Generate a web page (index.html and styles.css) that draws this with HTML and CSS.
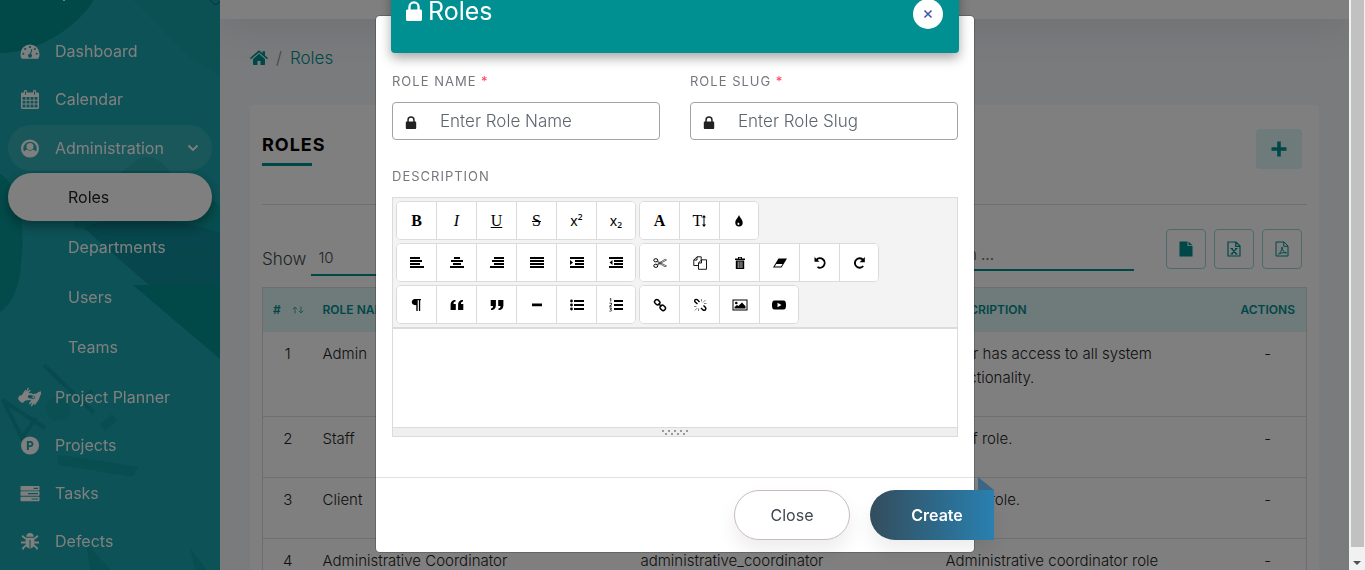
FILE: index.html
```html
<!DOCTYPE html>
<html lang="en">
<head>
<meta charset="utf-8">
<title>Roles</title>
<link rel="stylesheet" href="styles.css">
</head>
<body>
<svg class="sprite" aria-hidden="true">
  <symbol id="gauge" viewBox="0 0 20 16"><path fill-rule="evenodd" d="M10 1a9.500 9.500 0 0 0-9.500 9.500c0 2 .5 3.500 1.300 4.700h16.400c.8-1.200 1.300-2.700 1.300-4.700A9.500 9.500 0 0 0 10 1zM10 2.500a1 1 0 1 1 0 2 1 1 0 0 1 0-2zM5.200 4.500a1 1 0 1 1 0 2 1 1 0 0 1 0-2zM3.300 9.300a1 1 0 1 1 0 2 1 1 0 0 1 0-2zM14.800 4.500a1 1 0 1 1 0 2 1 1 0 0 1 0-2zM16.700 9.300a1 1 0 1 1 0 2 1 1 0 0 1 0-2zM11.400 5.400l1 .3-1.300 4.800a2 2 0 1 1-1.100-.3z"/></symbol>
  <symbol id="calendar" viewBox="0 0 18 19"><path fill-rule="evenodd" d="M1.500 2.500H3V1.300C3 .6 3.500 0 4.200 0h.6C5.500 0 6 .6 6 1.300v1.200h6V1.300c0-.7.5-1.300 1.200-1.300h.6c.7 0 1.200.6 1.200 1.300v1.200h1.500c.8 0 1.500.6 1.500 1.400v13.600c0 .8-.7 1.500-1.500 1.500h-15C.7 19 0 18.300 0 17.500V3.900c0-.8.7-1.400 1.500-1.400zM4 1.200v3.600h1V1.200zM13 1.200v3.600h1V1.200zM1.500 7v2.800h3V7zM5.500 7v2.800h3V7zM9.500 7v2.800h3V7zM13.500 7v2.800h3V7zM1.500 10.800v2.700h3v-2.700zM5.500 10.800v2.700h3v-2.700zM9.500 10.800v2.700h3v-2.700zM13.500 10.800v2.700h3v-2.700zM1.500 14.500v3h3v-3zM5.500 14.500v3h3v-3zM9.500 14.500v3h3v-3zM13.500 14.500v3h3v-3z"/></symbol>
  <symbol id="user" viewBox="0 0 20 20"><circle cx="10" cy="10" r="8.300" fill="none" stroke="currentColor" stroke-width="2.400"/><circle cx="10" cy="8" r="3.700"/><path d="M3 15.500c.6-3 2-4.100 4.300-4.100 1.700 1.400 3.700 1.400 5.400 0 2.300 0 3.700 1.100 4.300 4.100C13 20 7 20 3 15.500z"/></symbol>
  <symbol id="hands" viewBox="0 0 24 20"><path d="M1 9l3-1 3-5 1 .2-.5 2L10 .5l1 .5-1.500 3.500L12 2.800l.8.700L10.500 6l3 .2c1 .3 1 1.500 0 1.600l-2 .2c-1.800 0-2.300 3-.3 3.300l1.800.2c.8.300.6 1.500-.4 1.500l-5 .5L4.500 16 2 14.500 0 12z"/><path d="M23 7l-2.500 6-3.500 5-1-.4.600-2.100-2.800 4-1-.6 1.300-3.400-2.600 2-.7-.8 2.100-3.200c-1-.6-.6-1.800.4-1.800l2.200.2c2-.2 2-3 .2-3.200l-2-.2c-1-.2-.9-1.500.1-1.600l4.200-.1L20.500 5l2.500-.8z"/><circle cx="15.300" cy="10.300" r="1"/></symbol>
  <symbol id="project" viewBox="0 0 20 20"><path fill-rule="evenodd" d="M10 .5a9.500 9.500 0 1 0 0 19 9.500 9.500 0 0 0 0-19zM6.700 5.200h3.800c4.200 0 4.200 6.300 0 6.300H8.800v3.300H6.700zM8.800 7v2.700h1.700c1.600 0 1.600-2.700 0-2.700z"/></symbol>
  <symbol id="server" viewBox="0 0 20 16"><path fill-rule="evenodd" d="M1 .5h18l.5.5v3.500l-.5.500H1l-.5-.5V1zM13.500 2.200v1.200H18V2.200zM1 5.800h18l.5.500v3.500l-.5.500H1l-.5-.5V6.300zM8 7.500v1.200h10V7.500zM1 11.200h18l.5.500v3.500l-.5.500H1l-.5-.5v-3.500zM11.500 12.900v1.200H18v-1.200z"/></symbol>
  <symbol id="bug" viewBox="0 0 18 18"><path d="M5.500 4.500a3.500 3.500 0 0 1 7 0zM4.800 5.500h8.400v4.500c0 3-1 5.200-3.700 5.800V7.500H8.500v8.300C5.800 15.200 4.800 13 4.800 10z"/><path fill="none" stroke="currentColor" stroke-width="1.800" d="M1.500 3.500l3.500 3M16.500 3.500l-3.500 3M.5 10h4.500M17.500 10H13M2.500 16.500V15L5.500 12.500M15.500 16.500V15l-3-2.500"/></symbol>
  <symbol id="chevron" viewBox="0 0 12 8"><path fill="none" stroke="currentColor" stroke-width="1.800" d="M1.500 1.500L6 6l4.500-4.500"/></symbol>
  <symbol id="home" viewBox="0 0 18 16"><path d="M0 8l9-7.700 3.500 3V1.200H15v4.300L18 8l-1 1.200-8-6.800-8 6.800zM3 9l6-5.200L15 9v5.500l-.6.600h-3.900V11H7.500v4.100H3.600l-.6-.6z"/></symbol>
  <symbol id="lock" viewBox="0 0 16 20"><path fill-rule="evenodd" d="M2.300 8.500V6a5.700 5.700 0 0 1 11.400 0v2.500h.8c.8 0 1.500.6 1.500 1.400v8.600c0 .8-.7 1.500-1.500 1.500h-13C.7 20 0 19.300 0 18.500V9.900c0-.8.700-1.400 1.500-1.400zM4.600 8.500h6.800V6a3.400 3.400 0 0 0-6.800 0z"/></symbol>
  <symbol id="plus" viewBox="0 0 16 16"><path d="M6.200.5h3.600v5.700h5.700v3.600H9.800v5.700H6.200V9.800H.5V6.200h5.700z"/></symbol>
  <symbol id="file" viewBox="0 0 14 16"><path d="M.5.500h8v4.500h5v10.500H.5zM9.500.5l4 3.700h-4z"/></symbol>
  <symbol id="file-x" viewBox="0 0 14 16"><path fill="none" stroke="currentColor" stroke-width="1.200" d="M1 1h8l4 4v10H1zM8.700 1v4.300H13M4.500 7.500l5 5.500M9.500 7.500l-5 5.500M3.500 7.500h2.500M8 7.500h2.500M3.500 13H6M8 13h2.500"/></symbol>
  <symbol id="file-pdf" viewBox="0 0 14 16"><path fill="none" stroke="currentColor" stroke-width="1" d="M1 1h8l4 4v10H1zM8.700 1v4.300H13M3 13.500c2-1 4-4 4-7.500 0 3 2 5.500 4.500 6-2.500-.7-5-.2-7 .7"/></symbol>
  <symbol id="left" viewBox="0 0 14 12"><path d="M0 0h10v2H0zM0 3h12v2H0zM0 6h10v2H0zM0 9h14v2H0z"/></symbol>
  <symbol id="center" viewBox="0 0 14 12"><path d="M4 0h6v2H4zM1 3h12v2H1zM3 6h8v2H3zM0 9h14v2H0z"/></symbol>
  <symbol id="right" viewBox="0 0 14 12"><path d="M4 0h10v2H4zM2 3h12v2H2zM4 6h10v2H4zM0 9h14v2H0z"/></symbol>
  <symbol id="justify" viewBox="0 0 14 12"><path d="M0 0h14v2H0zM0 3h14v2H0zM0 6h14v2H0zM0 9h14v2H0z"/></symbol>
  <symbol id="indent" viewBox="0 0 14 12"><path d="M0 0h14v2H0zM5 3h9v2H5zM5 6h9v2H5zM0 9h14v2H0zM0 3l3 2.500L0 8z"/></symbol>
  <symbol id="outdent" viewBox="0 0 14 12"><path d="M0 0h14v2H0zM5 3h9v2H5zM5 6h9v2H5zM0 9h14v2H0zM3.500 3l-3 2.500 3 2.500z"/></symbol>
  <symbol id="para" viewBox="0 0 14 14"><path d="M5 1h6v1.300h-.8V13H8.900V2.300H7.700V13H6.300V7.300C0 7.300 1 1 5 1z"/></symbol>
  <symbol id="quote-open" viewBox="0 0 14 14"><path d="M5.500 2v1.500C4 3.700 3.500 4.600 3.500 6h2.300v6H.6V7c0-3 1.500-5 4.900-5zM13 2v1.500c-1.500.2-2 1.100-2 2.500h2.300v6H8.100V7c0-3 1.500-5 4.900-5z"/></symbol>
  <symbol id="quote-close" viewBox="0 0 14 14"><path d="M1 12v-1.500C2.500 10.300 3 9.400 3 8H.7V2h5.200v5c0 3-1.500 5-4.900 5zM8.500 12v-1.500c1.500-.2 2-1.100 2-2.500H8.200V2h5.200v5c0 3-1.500 5-4.900 5z"/></symbol>
  <symbol id="rule" viewBox="0 0 14 14"><path d="M2 5.500h10v2.800H2z"/></symbol>
  <symbol id="bullets" viewBox="0 0 14 12"><path d="M4 1h10v2H4zM4 5h10v2H4zM4 9h10v2H4z"/><circle cx="1.500" cy="2" r="1.400"/><circle cx="1.500" cy="6" r="1.400"/><circle cx="1.500" cy="10" r="1.400"/></symbol>
  <symbol id="numbers" viewBox="0 0 14 14"><path d="M5 2h9v2H5zM5 6h9v2H5zM5 10h9v2H5z"/><path fill="none" stroke="currentColor" stroke-width=".8" d="M.8 1l1-.5v3M.5 5.200h2v1.500l-2 1.500h2.200M.5 10h2L1.500 11.500c2 0 1.500 2-1 1.600"/></symbol>
  <symbol id="drop" viewBox="0 0 14 14"><path fill-rule="evenodd" d="M7 1c1 3 3.700 4.500 3.700 7.800a3.700 3.700 0 0 1-7.400 0C3.300 5.500 6 4 7 1zM6 8.500c-.9.700-.7 2.600.7 2.500 1-.2 1-1.600.3-1.900z"/></symbol>
  <symbol id="cut" viewBox="0 0 14 14"><g fill="none" stroke="currentColor"><ellipse cx="2.800" cy="4.300" rx="2" ry="1.600"/><ellipse cx="2.800" cy="9.800" rx="2" ry="1.600"/><path stroke-width=".6" d="M4.500 5.200L13.500 10l-1.300.8L4.700 6.500M4.500 9L13.500 4l-1.300-.8L4.700 7.800"/></g></symbol>
  <symbol id="copy" viewBox="0 0 14 14"><path fill="none" stroke="currentColor" stroke-width=".9" d="M5 9.500H.8V4L4 .8h4.200v3M4 .8V4H.8M8.500 3.800h5v9.500h-8V7zM8.500 3.800V7h-3"/></symbol>
  <symbol id="trash" viewBox="0 0 14 14"><path fill-rule="evenodd" d="M2 2.500h3V1h4v1.500h3v1.500H2zM2.800 4.500h8.400V13H2.800zM4.800 5.500V12h.7V5.500zM6.700 5.500V12h.7V5.500zM8.600 5.500V12h.7V5.500zM6 1.800v.7h2v-.7z"/></symbol>
  <symbol id="eraser" viewBox="0 0 14 14"><path fill-rule="evenodd" d="M5.500 2.500H14L8.500 11.500H0zM3.300 8L1.700 10.600H8L9.600 8z"/></symbol>
  <symbol id="undo" viewBox="0 0 14 14"><path fill="none" stroke="currentColor" stroke-width="1.900" d="M3.500 3.800a4.700 4.700 0 1 1 1 7.200"/><path d="M1.500 1v4.800h5z"/></symbol>
  <symbol id="redo" viewBox="0 0 14 14"><path fill="none" stroke="currentColor" stroke-width="1.900" d="M11.200 10a4.700 4.700 0 1 1 0-6"/><path d="M12.800 1v5.200H7.600z"/></symbol>
  <symbol id="link" viewBox="0 0 14 14"><g fill="none" stroke="currentColor" stroke-width="1.500"><rect x="1.500" y="2" width="5.500" height="4.400" rx="2" transform="rotate(45 4.200 4.200)"/><rect x="7" y="7.700" width="5.500" height="4.400" rx="2" transform="rotate(45 9.800 9.900)"/><path d="M5.500 5.500l3 3"/></g></symbol>
  <symbol id="unlink" viewBox="0 0 14 14"><path fill="none" stroke="currentColor" stroke-width="1.400" d="M4.500 6L2 3.800c-1-2 1-3 2.500-2L6.500 4M8 10l2 2c2 1 3.500-1 2.500-2.500L10.500 7.500"/><path fill="none" stroke="currentColor" stroke-width=".5" d="M8.500 1v2.500M12.500 2L10 4.500M13.500 5.500H11M1 8.500h2.500M1.800 12.500L4.300 10M5.500 13v-2.500"/></symbol>
  <symbol id="image" viewBox="0 0 16 14"><path fill-rule="evenodd" d="M.5 1.500h15v11H.5zM1.500 2.500v9h13v-9z"/><circle cx="4.300" cy="5" r="1.300"/><path d="M2.500 10.500V9L5 7l1.300 1L10 4.500l3.500 3.700v2.300z"/></symbol>
  <symbol id="video" viewBox="0 0 14 14"><path fill-rule="evenodd" d="M2.500 2.500h9C13.500 2.500 14 4 14 7s-.5 4.500-2.500 4.500h-9C.5 11.500 0 10 0 7s.5-4.500 2.500-4.500zM5.500 4.800v4.400L9.500 7z"/></symbol>
  <symbol id="sort" viewBox="0 0 12 8"><path fill="none" stroke="currentColor" d="M3 7.500V1M.8 3.200L3 1l2.200 2.200M9 .5V7M6.800 4.800L9 7l2.200-2.200"/></symbol>
  <symbol id="text-size" viewBox="0 0 4 12"><path d="M2 0l2 2.500H2.500v7H4L2 12 0 9.500h1.500v-7H0z"/></symbol>
</svg>
<div class="screen">
  <div class="app">
    <aside class="sidebar">
      <svg class="sidebar-art" viewBox="0 0 220 570" preserveAspectRatio="none" aria-hidden="true">
        <path class="art-dark" d="M0 0h94C75 30 35 53 0 53z"/>
        <path class="art-dark" d="M0 174c22 12 25 60 21 90C20 285 12 305 0 312z" opacity=".8"/>
        <path class="art-dark" d="M133 0h87v75L190 58z" opacity=".15"/>
        <path class="art-dark" d="M120 173l18-14c12-5 22 0 31 12l51 34v45L74 228V221h20z" opacity=".5"/>
        <path fill="#0c8c98" d="M84 228c30-18 110-5 136 5v67L150 286z"/>
        <path class="art-dark" d="M133 285h87v74z"/>
        <path fill="none" stroke="#0a9f78" opacity=".45" d="M110 235q40 5 60 30t50 15M120 240q35 10 60 35t40 25M160 232q5 28 60 20M85 230q60 10 90 55"/>
        <g opacity=".35"><path class="art-line" d="M2 400l43 28M4 402l18 36 14-20M44 365l50 48M78 403l14-12"/><circle class="art-dark" cx="58" cy="409" r="12" opacity=".5"/><path class="art-dark" d="M100 424l12-10 5 6-12 11zM86 543l25 27H90zM190 548l17 22h-12zM58 455q40 5 80 12l-5 10-75-12z"/></g>
        <path fill="#fff" d="M63 0h2v1h-2z"/>
        <path fill="none" stroke="#0b6f70" d="M210 0l5 5 5-3"/>
      </svg>
      <nav class="menu">
        <a href="#"><svg><use href="#gauge"/></svg>Dashboard</a>
        <a href="#"><svg><use href="#calendar"/></svg>Calendar</a>
        <a href="#" class="open"><svg><use href="#user"/></svg>Administration<svg class="chev"><use href="#chevron"/></svg></a>
        <div class="submenu">
          <a href="#" class="active">Roles</a>
          <a href="#">Departments</a>
          <a href="#">Users</a>
          <a href="#">Teams</a>
        </div>
        <a href="#"><svg class="wide"><use href="#hands"/></svg>Project Planner</a>
        <a href="#"><svg><use href="#project"/></svg>Projects</a>
        <a href="#"><svg><use href="#server"/></svg>Tasks</a>
        <a href="#"><svg><use href="#bug"/></svg>Defects</a>
      </nav>
    </aside>
    <main class="main">
      <div class="topbar"></div>
      <div class="content">
        <nav class="crumbs"><a href="#" aria-label="Home"><svg><use href="#home"/></svg></a><span>/</span><a href="#">Roles</a></nav>
        <section class="card">
          <header class="card-head">
            <h1>Roles</h1>
            <button class="add" aria-label="Add role"><svg><use href="#plus"/></svg></button>
          </header>
          <div class="tools">
            <label class="show">Show <select><option>10</option></select></label>
            <input class="search" type="search" placeholder="Search ..." aria-label="Search">
            <div class="exports">
              <button aria-label="CSV"><svg><use href="#file"/></svg></button>
              <button aria-label="Excel"><svg><use href="#file-x"/></svg></button>
              <button aria-label="PDF"><svg><use href="#file-pdf"/></svg></button>
            </div>
          </div>
          <table class="roles">
            <colgroup><col class="c-num"><col class="c-name"><col class="c-slug"><col class="c-desc"><col class="c-act"></colgroup>
            <thead><tr><th class="num"># <svg><use href="#sort"/></svg></th><th>Role Name</th><th>Role Slug</th><th>Description</th><th class="act">Actions</th></tr></thead>
            <tbody>
              <tr><td class="num">1</td><td>Admin</td><td>admin</td><td>User has access to all system functionality.</td><td class="act">-</td></tr>
              <tr><td class="num">2</td><td>Staff</td><td>staff</td><td>Staff role.</td><td class="act">-</td></tr>
              <tr><td class="num">3</td><td>Client</td><td>client</td><td>Client role.</td><td class="act">-</td></tr>
              <tr><td class="num">4</td><td>Administrative Coordinator</td><td>administrative_coordinator</td><td>Administrative coordinator role</td><td class="act">-</td></tr>
            </tbody>
          </table>
        </section>
      </div>
    </main>
  </div>
  <div class="scrollbar" aria-hidden="true"><div class="thumb"></div><div class="arrow"></div></div>
  <div class="backdrop">
    <div class="modal" role="dialog" aria-label="Roles">
      <header class="modal-head">
        <h2><svg><use href="#lock"/></svg>Roles</h2>
        <button class="close" aria-label="Close dialog"><svg viewBox="0 0 10 10"><path fill="none" stroke="currentColor" stroke-width="1.500" d="M1.500 1.500l7 7M8.500 1.500l-7 7"/></svg></button>
      </header>
      <div class="modal-body">
        <div class="fields">
          <div class="field"><label for="name">Role Name <sup>*</sup></label><div class="box"><svg><use href="#lock"/></svg><input id="name" type="text" placeholder="Enter Role Name"></div></div>
          <div class="field"><label for="slug">Role Slug <sup>*</sup></label><div class="box"><svg><use href="#lock"/></svg><input id="slug" type="text" placeholder="Enter Role Slug"></div></div>
        </div>
        <label class="desc-label" for="desc">Description</label>
        <div class="editor">
          <div class="bar">
            <div class="group"><button><b>B</b></button><button><i>I</i></button><button><u>U</u></button><button><s>S</s></button><button class="sans">x²</button><button class="sans">x₂</button></div>
            <div class="group"><button><b>A</b></button><button aria-label="Text size"><span class="size">T<svg><use href="#text-size"/></svg></span></button><button aria-label="Ink"><svg><use href="#drop"/></svg></button></div>
            <div class="group"><button aria-label="Left"><svg class="rows"><use href="#left"/></svg></button><button aria-label="Center"><svg class="rows"><use href="#center"/></svg></button><button aria-label="Right"><svg class="rows"><use href="#right"/></svg></button><button aria-label="Justify"><svg class="rows"><use href="#justify"/></svg></button><button aria-label="Indent"><svg class="rows"><use href="#indent"/></svg></button><button aria-label="Outdent"><svg class="rows"><use href="#outdent"/></svg></button></div>
            <div class="group"><button aria-label="Cut"><svg><use href="#cut"/></svg></button><button aria-label="Copy"><svg><use href="#copy"/></svg></button><button aria-label="Delete"><svg><use href="#trash"/></svg></button><button aria-label="Clear"><svg><use href="#eraser"/></svg></button><button aria-label="Undo"><svg><use href="#undo"/></svg></button><button aria-label="Redo"><svg><use href="#redo"/></svg></button></div>
            <div class="group"><button aria-label="Paragraph"><svg><use href="#para"/></svg></button><button aria-label="Open quote"><svg><use href="#quote-open"/></svg></button><button aria-label="Close quote"><svg><use href="#quote-close"/></svg></button><button aria-label="Rule"><svg><use href="#rule"/></svg></button><button aria-label="Bullets"><svg class="rows"><use href="#bullets"/></svg></button><button aria-label="Numbers"><svg><use href="#numbers"/></svg></button></div>
            <div class="group"><button aria-label="Link"><svg><use href="#link"/></svg></button><button aria-label="Unlink"><svg><use href="#unlink"/></svg></button><button aria-label="Image"><svg class="pic"><use href="#image"/></svg></button><button aria-label="Video"><svg><use href="#video"/></svg></button></div>
          </div>
          <textarea id="desc"></textarea>
          <div class="grip"><svg viewBox="0 0 26 5"><path d="M0 0h2v2H0zM6 0h2v2H6zM12 0h2v2h-2zM18 0h2v2h-2zM24 0h2v2h-2zM3 3h2v2H3zM9 3h2v2H9zM15 3h2v2h-2zM21 3h2v2h-2z"/></svg></div>
        </div>
      </div>
      <footer class="modal-foot">
        <button class="btn cancel">Close</button>
        <button class="btn create">Create</button>
      </footer>
    </div>
  </div>
</div>
</body>
</html>
```

FILE: styles.css
```css
* { box-sizing: border-box; }
body { margin: 0; font-family: Inter, "Open Sans", sans-serif; font-size: 15px; line-height: 24px; color: #40484f; }
button, input, select, textarea { font: inherit; color: inherit; margin: 0; }
a { color: inherit; text-decoration: none; }
svg { fill: currentColor; display: block; }
.sprite { display: none; }
.screen { position: relative; display: flex; height: 100vh; overflow: hidden; }
.app { flex: 1; min-width: 0; display: flex; }

.sidebar { position: relative; width: 220px; flex: none; overflow: hidden; background: #1aa4ac; color: #fff; }
.sidebar-art { position: absolute; inset: 0; width: 100%; height: 100%; }
.art-dark { fill: #009290; }
.art-line { fill: none; stroke: #008280; stroke-width: 4; }
.menu { position: relative; padding: 27px 8px 0; font-size: 16px; }
.menu a { display: flex; align-items: center; height: 48px; padding-left: 12px; gap: 15px; border-radius: 24px; }
.menu svg { width: 20px; height: 19px; }
.menu svg.wide { width: 24px; height: 20px; margin: 0 -2px; }
.menu .open { background: rgba(255, 255, 255, .12); height: 46px; margin: 2px 0; }
.menu svg.chev { width: 12px; height: 8px; margin-left: auto; margin-right: 13px; }
.submenu { display: grid; gap: 2px; padding-bottom: 2px; }
.submenu a { padding-left: 60px; }
.submenu .active { background: #fff; color: #222; box-shadow: 0 5px 12px rgba(0, 0, 0, .35); }

.main { flex: 1; min-width: 0; background: #f4f6fa; }
.topbar { height: 19px; background: #fff; box-shadow: 0 0 40px rgba(80, 90, 100, .25); }
.content { padding: 27px 30px 0; }
.crumbs { display: flex; align-items: center; gap: 8px; font-size: 17px; font-weight: 300; color: #009091; }
.crumbs span { color: #888; }
.crumbs svg { width: 18px; height: 16px; }
.card { margin-top: 35px; padding: 24px 12px 0; background: #fff; border-radius: 4px; min-height: 600px; }
.card-head { display: flex; justify-content: space-between; align-items: flex-start; padding-right: 5px; height: 76px; border-bottom: 1px solid #ddd; }
.card-head h1 { margin: 4px 0 0; font-size: 18px; line-height: 24px; font-weight: 700; letter-spacing: 1px; text-transform: uppercase; color: #000; }
.card-head h1::after { content: ""; display: block; width: 50px; height: 3px; margin-top: 6px; background: #009091; }
.add { width: 46px; height: 40px; display: grid; place-items: center; border: 0; border-radius: 4px; background: #dff4f5; color: #009091; }
.add svg { width: 16px; height: 16px; }
.tools { display: flex; align-items: flex-start; padding: 24px 5px 11px 0; }
.show { display: flex; align-items: center; gap: 5px; margin-top: 13px; font-size: 17px; font-weight: 300; }
.show select { appearance: none; width: 120px; height: 34px; padding: 0 7px; border: 0; border-bottom: 2px solid #009091; border-radius: 0; background: none; font-size: 15px; }
.search { width: 207px; height: 32px; margin: 10px 0 0 auto; padding: 0; border: 0; border-bottom: 2px solid #009091; background: none; }
.exports { display: flex; gap: 8px; margin-left: 32px; }
.exports button { width: 40px; height: 40px; display: grid; place-items: center; border: 1px solid #9ed4d6; border-radius: 4px; background: none; color: #009091; }
.exports svg { width: 14px; height: 16px; }
.roles { width: 100%; table-layout: fixed; border-collapse: collapse; border: 1px solid #d8dadd; }
.c-num { width: 50px; }
.c-name { width: 318px; }
.c-slug { width: 305px; }
.c-act { width: 77px; }
.roles th { height: 44px; padding: 0 10px; background: #dff4f5; color: #009091; font-size: 12px; font-weight: 600; text-align: left; text-transform: uppercase; white-space: nowrap; }
.roles th svg { display: inline-block; width: 12px; height: 8px; margin-left: 8px; opacity: .7; }
.roles td { padding: 10px 10px 26px; vertical-align: top; border-bottom: 1px solid #dbe1e6; font-weight: 300; color: #222; }
.roles td.num { text-align: center; }
.roles .act { text-align: center; padding-left: 0; padding-right: 0; }

.scrollbar { position: relative; z-index: 2; width: 16px; flex: none; display: flex; flex-direction: column; align-items: center; background: #f1f1f1; }
.thumb { width: 13px; flex: 1; background: #c1c1c1; }
.arrow { width: 0; margin: 14px 0 5px; border: 4px solid transparent; border-top-color: #505050; border-bottom: 0; }

.backdrop { position: absolute; inset: 0; display: flex; justify-content: center; align-items: flex-start; padding: 16px 15px 0 0; background: rgba(0, 0, 0, .5); }
.modal { width: 598px; background: #fff; border-radius: 4px; box-shadow: 0 0 0 1px rgba(0, 0, 0, .2); }
.modal-head { display: flex; align-items: center; justify-content: space-between; height: 84px; margin: -47px 15px 0; padding: 0 16px 0 15px; border-radius: 4px; background: #009091; color: #fff; box-shadow: 0 5px 12px rgba(0, 0, 0, .35); }
.modal-head h2 { display: flex; align-items: center; gap: 6px; margin: 0; font-size: 25px; font-weight: 400; line-height: 30px; }
.modal-head h2 svg { width: 16px; height: 20px; }
.close { width: 30px; height: 30px; margin-top: 6px; display: grid; place-items: center; border: 0; padding: 0; border-radius: 50%; background: #fff; color: #3f51a5; }
.close svg { width: 10px; height: 10px; }
.modal-body { padding: 18px 16px 40px; }
.fields { display: grid; grid-template-columns: repeat(2, minmax(0, 1fr)); gap: 30px; }
.field label, .desc-label { display: block; font-size: 13px; line-height: 20px; letter-spacing: 1px; text-transform: uppercase; color: #74787e; }
.field sup { color: #ff3b5c; font-size: 13px; line-height: 0; vertical-align: 0; }
.box { display: flex; align-items: center; height: 38px; margin-top: 11px; padding: 0 12px; gap: 23px; border: 1px solid #a0a3a8; border-radius: 4px; }
.box svg { width: 12px; height: 13px; margin-top: 3px; color: #222; }
.box input { flex: 1; min-width: 0; height: 34px; padding: 0; border: 0; background: none; outline: 0; font-size: 17px; font-weight: 300; }
input::placeholder { color: #6c757d; opacity: 1; }
.box input::placeholder { color: #5c656d; }
.desc-label { margin-top: 26px; }
.editor { margin-top: 11px; border: 1px solid #dbdbdb; }
.bar { display: flex; flex-wrap: wrap; gap: 3px; padding: 3px; background: #f3f3f3; border-bottom: 2px solid #dbdbdb; }
.group { display: flex; background: #fff; border: 1px solid #dbdbdb; border-radius: 5px; overflow: hidden; }
.group button { width: 40px; height: 37px; display: grid; place-items: center; padding: 0; border: 0; border-right: 1px solid #dbdbdb; background: #fff; color: #000; font-family: "Liberation Serif", serif; font-size: 16px; }
.group button:last-child { width: 38px; border-right: 0; }
.group .sans { font-family: "Noto Sans", sans-serif; font-size: 14px; }
.group svg { width: 14px; height: 14px; }
.group svg.rows { height: 12px; }
.group svg.pic { width: 16px; }
.size { display: flex; align-items: center; }
.group .size svg { width: 4px; height: 12px; }
.editor textarea { display: block; width: 100%; height: 98px; padding: 10px; border: 0; resize: none; outline: 0; }
.grip { display: grid; place-items: center; height: 9px; border-top: 1px solid #dbdbdb; background: #efefef; }
.grip svg { width: 26px; height: 5px; fill: #999; }
.modal-foot { display: flex; justify-content: flex-end; gap: 20px; padding: 12px 0; border-top: 1px solid #dee2e6; }
.btn { height: 50px; border-radius: 25px; font-size: 16px; box-shadow: 0 10px 20px rgba(0, 0, 0, .08); }
.cancel { width: 116px; border: 1px solid #c9bcb8; background: #fff; }
.create { position: relative; width: 124px; margin-right: -20px; padding: 0 0 0 10px; border: 0; border-radius: 25px 0 0 25px; background: linear-gradient(90deg, #334d5c, #2980b0); color: #fff; font-weight: 600; }
.create::before { content: ""; position: absolute; right: 0; bottom: 100%; border-left: 16px solid #3d6684; border-top: 13px solid transparent; }
```
